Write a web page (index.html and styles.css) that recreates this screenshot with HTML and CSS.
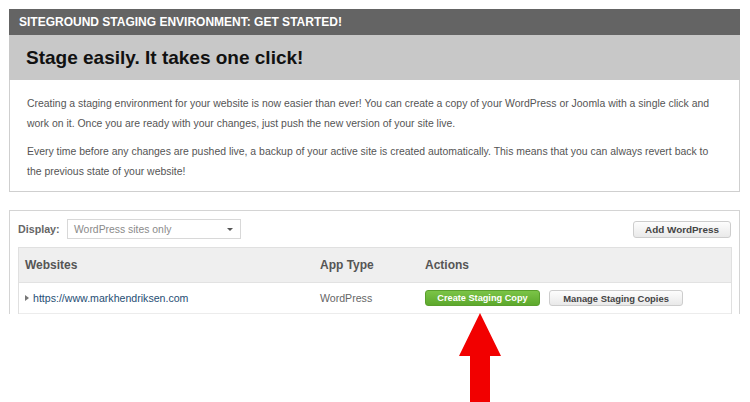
FILE: index.html
```html
<!DOCTYPE html>
<html>
<head>
<meta charset="utf-8">
<link rel="stylesheet" href="styles.css">
</head>
<body>
<div class="page">
  <div class="bar-top">SITEGROUND STAGING ENVIRONMENT: GET STARTED!</div>
  <div class="bar-title">Stage easily. It takes one click!</div>
  <div class="intro">
    <p>Creating a staging environment for your website is now easier than ever! You can create a copy of your WordPress or Joomla with a single click and work on it. Once you are ready with your changes, just push the new version of your site live.</p>
    <p>Every time before any changes are pushed live, a backup of your active site is created automatically. This means that you can always revert back to the previous state of your website!</p>
  </div>
  <div class="sites">
    <div class="toolbar">
      <span class="label">Display:</span>
      <div class="select"><span>WordPress sites only</span><span class="caret"></span></div>
      <button class="btn add">Add WordPress</button>
    </div>
    <div class="table">
      <div class="row head">
        <div class="cell">Websites</div>
        <div class="cell">App Type</div>
        <div class="cell">Actions</div>
      </div>
      <div class="row body">
        <div class="cell"><span class="tri"></span><a class="link">https://www.markhendriksen.com</a></div>
        <div class="cell type">WordPress</div>
        <div class="cell actions">
          <button class="btn green">Create Staging Copy</button>
          <button class="btn manage">Manage Staging Copies</button>
        </div>
      </div>
    </div>
  </div>
  <svg class="arrow" width="44" height="90" viewBox="0 0 44 90">
    <polygon points="21,0 42,43 31,43 31,90 11,90 11,43 0,43" fill="#f20000"/>
  </svg>
</div>
</body>
</html>
```
FILE: styles.css
```css
html, body {
  margin: 0;
  padding: 0;
  background: #fff;
}
body {
  font-family: "Liberation Sans", Arial, sans-serif;
  width: 750px;
  height: 402px;
  overflow: hidden;
}
.page {
  position: relative;
  padding: 9px 10px 0 9px;
}
.bar-top {
  height: 26px;
  line-height: 27px;
  background: #646464;
  color: #fff;
  font-weight: bold;
  font-size: 12px;
  padding-left: 10px;
}
.bar-title {
  height: 45px;
  line-height: 45px;
  background: #c8c8c8;
  color: #111;
  font-weight: bold;
  font-size: 19px;
  padding-left: 17px;
}
.intro {
  border: 1px solid #cfcfcf;
  border-top: none;
  padding: 14px 17px 9px 17px;
  color: #555;
  font-size: 10.45px;
  line-height: 20px;
}
.intro p {
  margin: 0 0 8px 0;
}
.intro p:last-child {
  margin-bottom: 0;
}
.sites {
  margin-top: 18px;
  border: 1px solid #d4d4d4;
  border-bottom: none;
  padding: 7px 7px 0 8px;
}
.toolbar {
  display: flex;
  align-items: center;
  height: 22px;
  margin-bottom: 7px;
}
.label {
  font-size: 10.7px;
  font-weight: bold;
  color: #666;
  width: 49px;
}
.select {
  height: 20px;
  border: 1px solid #d8d8d8;
  display: flex;
  align-items: center;
  justify-content: space-between;
  padding: 0 7px 0 6px;
  box-sizing: border-box;
  width: 174px;
  font-size: 10.4px;
  color: #8a8a8a;
}
.caret {
  width: 0;
  height: 0;
  border-left: 3px solid transparent;
  border-right: 3px solid transparent;
  border-top: 3px solid #555;
}
.btn {
  font-family: "Liberation Sans", Arial, sans-serif;
  font-weight: bold;
  border-radius: 3px;
  padding: 0;
  cursor: pointer;
}
.add, .manage {
  background: linear-gradient(#fdfdfd, #e9e9e9);
  border: 1px solid #cdcdcd;
  color: #444;
}
.add {
  margin-left: auto;
  width: 98px;
  height: 17px;
  margin-right: 1px;
  font-size: 9.9px;
}
.table {
  border: 1px solid #e0e0e0;
  border-bottom: none;
}
.row {
  display: grid;
  grid-template-columns: 295px 105px 1fr;
  align-items: center;
}
.head {
  height: 34px;
  background: #efefef;
  border-bottom: 1px solid #e2e2e2;
  font-size: 12px;
  font-weight: bold;
  color: #555;
}
.body {
  height: 30px;
  border-bottom: 1px solid #ececec;
  font-size: 10.6px;
  color: #666;
}
.cell {
  padding-left: 6px;
  display: flex;
  align-items: center;
}
.tri {
  width: 0;
  height: 0;
  border-top: 3px solid transparent;
  border-bottom: 3px solid transparent;
  border-left: 4px solid #777;
  margin-right: 4px;
}
.link {
  color: #1f4e74;
}
.actions {
  gap: 9px;
}
.green {
  width: 115px;
  height: 16px;
  background: linear-gradient(#7bc447, #5da82c);
  border: 1px solid #5a9f2d;
  color: #fff;
  font-size: 9.2px;
}
.manage {
  width: 134px;
  height: 16px;
  font-size: 9.4px;
}
.arrow {
  position: absolute;
  left: 459px;
  top: 313px;
}
```
